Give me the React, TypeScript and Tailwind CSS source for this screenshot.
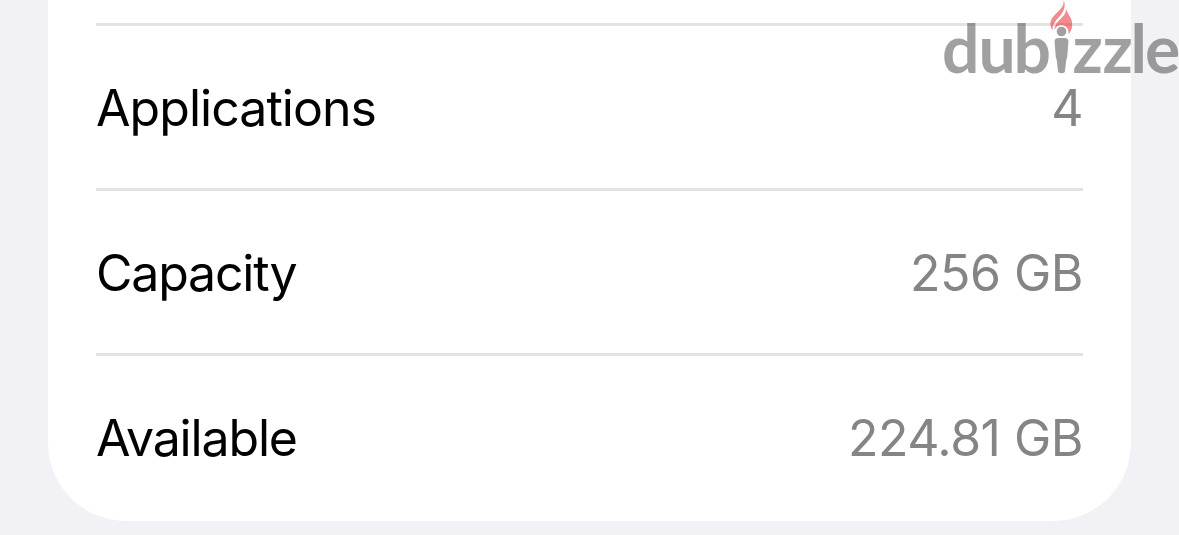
import React from 'react';

const rows = [
  { label: 'Applications', value: '4', tracking: 'tracking-[-0.95px]' },
  { label: 'Capacity', value: '256 GB', tracking: 'tracking-[-1.2px]' },
  { label: 'Available', value: '224.81 GB', tracking: 'tracking-[-1.15px]' },
];

function Watermark() {
  return (
    <svg className="h-full w-full" viewBox="940 0 239 90">
      <g fill="#414342" opacity="0.5" fontFamily="Lato, sans-serif" fontSize="66" fontWeight="700">
        <text x="942 978.500 1013.500" y="72.500">dub</text>
        <text x="1072.500 1102.500 1130.500 1145" y="72.500">zzle</text>
        {/* Torch figure */}
        <circle cx="1061.500" cy="31.500" r="4.800" />
        <path d="M1058.500 38h6q4.200 0 3.900 4l-1.200 15q-1 2-1.200 5l-1 9q-.3 2.200-3.500 2.200t-3.500-2.200l-1-9q-.2-3-1.200-5l-1.200-15q-.3-4 3.900-4z" />
      </g>
      {/* Flame */}
      <g fill="#e6171f" opacity="0.5">
        <path d="M1063.500 0C1065 8 1056 12 1051.500 19C1049.500 23 1050.500 27 1052.500 30.500C1052 20 1063 17 1064.500 7C1065 4 1064.500 2 1063.500 0Z" />
        <path d="M1066 8.500C1066.500 18 1054.500 20 1054.500 30C1056 26.500 1058.500 25 1061.500 25C1066 25 1069 28.500 1068.500 34C1072 31 1073 25 1071.500 20C1070.500 16.500 1067 13 1066 8.500Z" />
      </g>
    </svg>
  );
}

export default function App() {
  return (
    <div className="relative h-[535px] w-[1179px] overflow-hidden bg-[#f1f1f6] px-12 font-['Inter',sans-serif]">
      {/* Settings card */}
      <div className="h-[521px] w-[1083px] rounded-b-[78px] bg-white px-12 pt-[23px]">
        {rows.map((row) => (
          <div
            key={row.label}
            className="flex h-[165px] w-[987px] items-center justify-between border-t-3 border-[#e3e3e4] pt-[2px] text-[50px] leading-none"
          >
            <span className={`text-black ${row.tracking}`}>{row.label}</span>
            <span className="tracking-[-0.5px] text-[#858587]">{row.value}</span>
          </div>
        ))}
      </div>

      {/* Watermark */}
      <div className="absolute top-0 left-[940px] h-[90px] w-[239px]">
        <Watermark />
      </div>
    </div>
  );
}
